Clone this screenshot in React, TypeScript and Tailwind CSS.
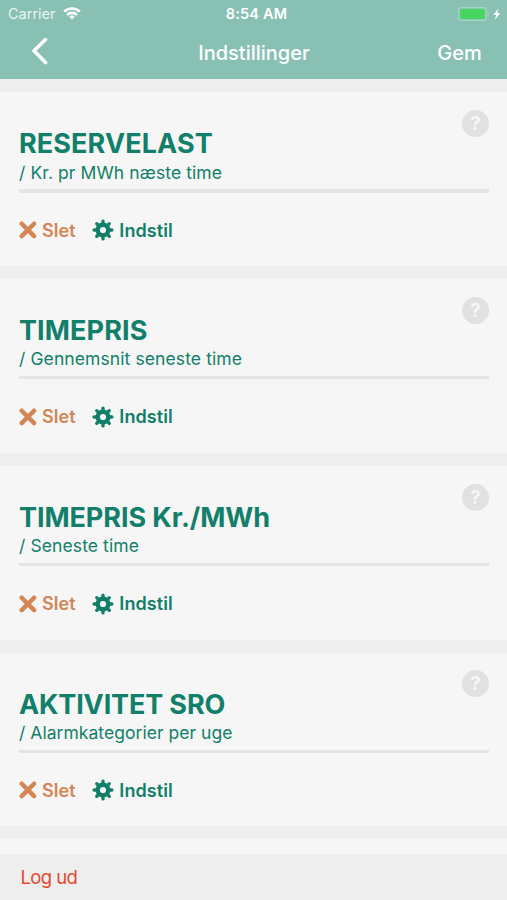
import React from "react";

type Widget = {
    title: string;
    subtitle: string;
    titleClass: string;
    subtitleClass: string;
};

const widgets: Widget[] = [
    { title: "RESERVELAST", subtitle: "/ Kr. pr MWh næste time", titleClass: "tracking-[0.1px]", subtitleClass: "tracking-[0.1px]" },
    { title: "TIMEPRIS", subtitle: "/ Gennemsnit seneste time", titleClass: "tracking-[0.1px]", subtitleClass: "tracking-[0.1px]" },
    { title: "TIMEPRIS Kr./MWh", subtitle: "/ Seneste time", titleClass: "tracking-[-0.08px]", subtitleClass: "tracking-[0.1px]" },
    { title: "AKTIVITET SRO", subtitle: "/ Alarmkategorier per uge", titleClass: "tracking-[-0.14px]", subtitleClass: "tracking-[0.04px]" },
];

const toothAngles = [0, 45, 90, 135, 180, 225, 270, 315];

function WifiIcon() {
    return (
        <svg className="w-[18px] h-[13px]" viewBox="0 0 18 13" fill="none" stroke="#fff" strokeWidth="2.6">
            <path d="M1.1 4.7a11.2 11.2 0 0 1 15.8 0" />
            <path d="M4 7.9a7.1 7.1 0 0 1 10 0" />
            <path d="M9 12.6 6.2 9.8a4 4 0 0 1 5.6 0z" fill="#fff" stroke="none" />
        </svg>
    );
}

function BatteryIcon() {
    return (
        <svg className="w-[43px] h-[14px]" viewBox="0 0 43 14" fill="none">
            <rect x="0.6" y="0.6" width="27.6" height="12.8" rx="2.6" stroke="#a9d5c6" strokeWidth="1.1" />
            <rect x="2.1" y="2.1" width="24.6" height="9.8" rx="1.2" fill="#47d760" />
            <path d="M29.6 4.8c1.6.6 1.6 3.8 0 4.4z" fill="#a9d5c6" />
            <path d="M40.4 1.4 35.2 7.9h3l-1.4 5 5.4-7h-3z" fill="#fff" />
        </svg>
    );
}

function CrossIcon() {
    return (
        <svg className="w-[18px] h-[18px]" viewBox="0 0 18 18" fill="none" stroke="currentColor" strokeWidth="4.4" strokeLinecap="round">
            <path d="M2.7 2.7l12.4 12.4M15.1 2.7L2.7 15.1" />
        </svg>
    );
}

function GearIcon() {
    return (
        <svg className="w-[22px] h-[22px]" viewBox="-11 -11 22 22" fill="none" stroke="currentColor">
            <circle r="5.3" strokeWidth="4.4" />
            {toothAngles.map((angle) => (
                <path key={angle} d="M0 -6.5V-8.9" strokeWidth="3.3" strokeLinecap="round" transform={`rotate(${angle})`} />
            ))}
        </svg>
    );
}

function WidgetCard({ widget }: { widget: Widget }) {
    return (
        <section className="relative h-[173.8px] shrink-0 bg-[#f6f6f6] pl-[19px] pr-[18px] pt-[36px]">
            <button
                aria-label="Hjælp"
                className="absolute right-[18px] top-[17.8px] flex h-[27px] w-[27px] items-center justify-center rounded-full bg-[#e1e1e1] text-[19px] font-semibold leading-none text-[#f8f8f8]"
            >
                ?
            </button>
            <h2 className={`h-[31.4px] whitespace-nowrap text-[27px] font-bold leading-[32px] ${widget.titleClass}`}>{widget.title}</h2>
            <p className={`h-[29.6px] whitespace-nowrap text-[17.5px] leading-[26px] ${widget.subtitleClass}`}>{widget.subtitle}</p>
            <hr className="h-[3.5px] border-0 bg-[#e4e4e4]" />
            <div className="mt-[25.4px] flex h-[24px] items-center">
                <button className="flex items-center gap-[5px] text-[18px] font-semibold text-[#d28555]">
                    <CrossIcon />
                    <span className="tracking-[0.1px]">Slet</span>
                </button>
                <button className="ml-[16px] flex items-center gap-[5.5px] text-[18px] font-semibold">
                    <GearIcon />
                    <span className="tracking-[0.1px]">Indstil</span>
                </button>
            </div>
        </section>
    );
}

export default function App() {
    return (
        <div className="flex h-[900px] w-[507px] flex-col overflow-hidden bg-[#eeeeee] font-['Inter','Liberation_Sans',sans-serif] text-[#117f69]">
            <header className="h-[79.4px] shrink-0 bg-[#88c0b4] text-white">
                <div className="grid h-[27px] grid-cols-3 items-center pl-[8px] pr-[6px] text-[14.5px]">
                    <div className="flex items-center gap-[7px] text-[#e9f5f1]">
                        <span>Carrier</span>
                        <WifiIcon />
                    </div>
                    <span className="pl-[4px] text-center font-semibold tracking-[0.2px]">8:54 AM</span>
                    <div className="flex justify-end">
                        <BatteryIcon />
                    </div>
                </div>
                <div className="grid h-[50px] grid-cols-3 items-center pl-[28px] pr-[25px] text-[20px] font-medium">
                    <button aria-label="Tilbage">
                        <svg className="ml-[3px] h-[28px] w-[18px]" viewBox="0 0 18 28" fill="none" stroke="currentColor" strokeWidth="3.6" strokeLinecap="round" strokeLinejoin="round">
                            <path d="M14.5 1.5 3 12.8 14.5 24.5" />
                        </svg>
                    </button>
                    <h1 className="pr-[2px] pt-px text-center">Indstillinger</h1>
                    <button className="pt-px text-right tracking-[0.1px]">Gem</button>
                </div>
            </header>

            <main className="flex flex-1 flex-col gap-[13px] overflow-hidden pt-[12.8px]">
                {widgets.map((widget) => (
                    <WidgetCard key={widget.title} widget={widget} />
                ))}
                {/* Next card, cut off by the footer */}
                <section className="h-[174px] shrink-0 bg-[#f6f6f6]" />
            </main>

            <footer className="flex h-[46px] shrink-0 items-center bg-[#eeeeee] pl-[20.5px] pt-[2px] text-[18.5px] text-[#e5482d]">
                <button className="tracking-[-0.6px]">Log ud</button>
            </footer>
        </div>
    );
}
